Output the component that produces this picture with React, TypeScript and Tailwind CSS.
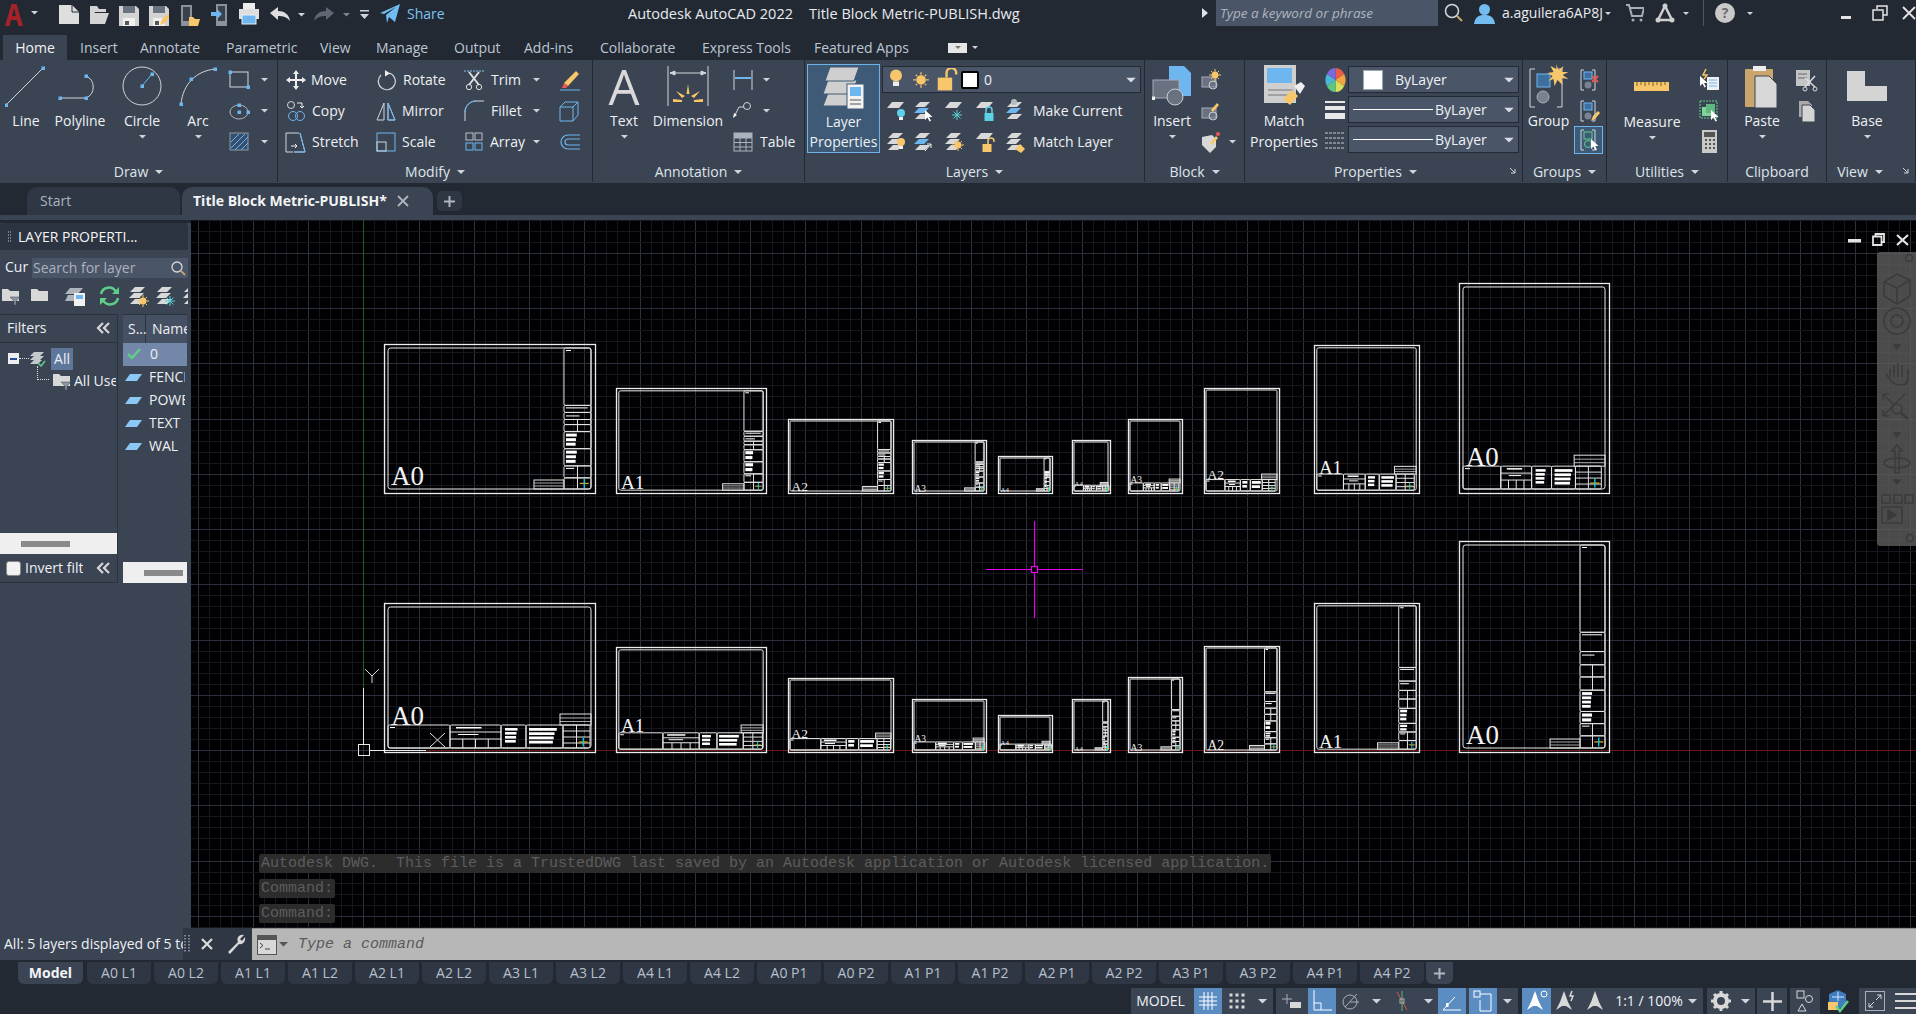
import React from 'react';

const B = '#6db6f0', L = '#d9d9d9', Y = '#f9c76b', W = '#e8e8e8', GR = '#5fce8a';

const S = ({ w, h, children }: { w: number; h: number; children?: React.ReactNode }) => (
  <svg width={w} height={h} viewBox={`0 0 ${w} ${h}`} className="block shrink-0" fill="none">{children}</svg>
);
const G = ({ x, y, c = B }: { x: number; y: number; c?: string }) => <rect x={x - 1.5} y={y - 1.5} width={3.5} height={3.5} fill={c} />;
const Caret = ({ c = '#cfd4da', w = 8 }: { c?: string; w?: number }) => (
  <S w={w} h={Math.ceil(w / 2)}><path d={`M0 0H${w}L${w / 2} ${w / 2}Z`} fill={c} /></S>
);

/* ---------- layer mini icons ---------- */
const para = (x: number, y: number, c: string, w = 15, h = 5, st?: string) => (
  <polygon points={`${x + 5},${y} ${x + w},${y} ${x + w - 5},${y + h} ${x},${y + h}`} fill={c} stroke={st} />
);
const Bulb = ({ x, y, c }: { x: number; y: number; c: string }) => (
  <g><circle cx={x} cy={y} r={4} fill={c} /><rect x={x - 2} y={y + 4} width={4} height={3} fill="#eee" /></g>
);
const Lock = ({ x, y, c, open }: { x: number; y: number; c: string; open?: boolean }) => (
  <g>
    <rect x={x - 4.5} y={y} width={9} height={8} fill={c} />
    <path d={open ? `M${x + 1} ${y}v-3a3 3 0 0 1 6 0v1` : `M${x - 3} ${y}v-3a3 3 0 0 1 6 0v3`} stroke={c} strokeWidth={1.5} />
  </g>
);
const Sun = ({ x, y, c = Y }: { x: number; y: number; c?: string }) => (
  <g stroke={c} strokeWidth={1}>
    <circle cx={x} cy={y} r={3.2} fill={c} />
    <path d={`M${x} ${y - 6}v2M${x} ${y + 4}v2M${x - 6} ${y}h2M${x + 4} ${y}h2M${x - 4} ${y - 4}l1 1M${x + 3} ${y + 3}l1 1M${x + 4} ${y - 4}l-1 1M${x - 3} ${y + 3}l-1 1`} />
  </g>
);
const Snow = ({ x, y }: { x: number; y: number }) => (
  <path d={`M${x} ${y - 5}v10M${x - 5} ${y}h10M${x - 3.5} ${y - 3.5}l7 7M${x + 3.5} ${y - 3.5}l-7 7`} stroke="#5ed0d8" strokeWidth={1} />
);
const Cur = ({ x, y, c = '#fff' }: { x: number; y: number; c?: string }) => (
  <path d={`M${x} ${y}l0 10l2.5-2.5l2 4l1.5-.8l-2-3.8h3.5z`} fill={c} />
);
const One = ({ children }: { children: React.ReactNode }) => (
  <S w={22} h={24}>{para(2, 3, L, 17, 6)}{children}</S>
);
const Three = ({ mid = L, children }: { mid?: string; children: React.ReactNode }) => (
  <S w={22} h={24}>{para(3, 3, L)}{para(2, 9, mid)}{para(3, 15, L)}{children}</S>
);

const Line = () => <S w={42} h={44}><path d="M2 40L37 5" stroke="#cfd6de" /><G x={38} y={4} /><G x={1} y={41} /></S>;
const Polyline = () => <S w={46} h={44}><path d="M3 34H29A12 12 0 0 0 29 12" stroke="#cfd6de" /><G x={3} y={34} /><G x={29} y={34} /><G x={29} y={12} /></S>;
const Circle = () => <S w={42} h={44}><circle cx={21} cy={22} r={19} stroke="#cfd6de" /><path d="M21 22L31 10" stroke={B} /><G x={21} y={22} /><G x={31} y={10} c={B} /></S>;
const Arc = () => <S w={40} h={44}><path d="M3 40C5 20 18 7 37 5" stroke="#cfd6de" /><G x={3} y={40} /><G x={13} y={15} /><G x={37} y={5} /></S>;
const Rect = () => <S w={22} h={20}><rect x={2} y={2} width={18} height={15} stroke="#cfd6de" /><G x={2} y={2} /><G x={20} y={17} /></S>;
const Ell = () => <S w={22} h={20}><ellipse cx={11} cy={11} rx={9} ry={7} stroke="#aeb5bf" /><G x={11} y={11} /><G x={11} y={4} /><G x={20} y={11} /></S>;
const Hatch = () => (
  <S w={22} h={24}>
    <rect x={2} y={3} width={18} height={17} fill="#34506e" stroke="#8d97a3" />
    <path d="M3 12l8-8M3 18l14-14M7 20l13-13M13 20l7-7" stroke={B} />
  </S>
);
const Move = () => <S w={20} h={20}><path d="M10 0l3 4h-2v5h5V7l4 3l-4 3v-2h-5v5h2l-3 4l-3-4h2v-5H4v2L0 10l4-3v2h5V4H7z" fill="#eee" /></S>;
const Copy = () => (
  <S w={20} h={20}><circle cx={5} cy={4} r={3.5} stroke="#cfd6de" /><circle cx={7} cy={15} r={4.5} stroke={B} /><circle cx={14} cy={15} r={4.5} stroke={B} /><path d="M11 2h5v5l-2-2M16 7l2-2" stroke="#eee" /></S>
);
const Stretch = () => <S w={22} h={22}><path d="M1 2V21H8M1 2H14M15 2l5 19H9" stroke="#cfd6de" /><path d="M6 15h6M10 13l2 2-2 2" stroke="#eee" /><path d="M15 2l5 19H9" stroke={B} /></S>;
const Rotate = () => <S w={20} h={22}><path d="M13 4A8.5 8.5 0 1 1 5 6" stroke="#cfd6de" strokeWidth={1.2} /><path d="M9 1l5 3.5-5 3z" fill="#eee" /></S>;
const Mirror = () => <S w={20} h={20}><path d="M8 2L1 19H8ZM12 2L19 19H12Z" stroke="#cfd6de" /><path d="M12 2L19 19H12Z" stroke={B} /></S>;
const Scale = () => <S w={20} h={20}><rect x={1} y={1} width={18} height={18} stroke={B} /><rect x={1} y={10} width={9} height={9} stroke="#cfd6de" /></S>;
const Trim = () => (
  <S w={20} h={22}><path d="M0 2h20" stroke="#8fc7ee" strokeDasharray="2 1" /><path d="M5 3l10 13M15 3L5 16" stroke="#ddd" strokeWidth={2} /><circle cx={5} cy={18} r={2.7} stroke="#ddd" /><circle cx={15} cy={18} r={2.7} stroke="#ddd" /></S>
);
const Fillet = () => <S w={20} h={22}><path d="M1 21V12C1 6 6 1 12 1H20" stroke="#cfd6de" /><path d="M1 12C1 6 6 1 12 1" stroke={B} /></S>;
const ArrayI = () => <S w={18} h={20}>{[[1, 1], [10, 1], [1, 11], [10, 11]].map(([x, y], i) => <rect key={i} x={x} y={y} width={7} height={7} stroke={i > 1 ? B : '#b9c2cc'} />)}</S>;
const Eraser = () => <S w={22} h={24}><path d="M5 15L17 3l3 3L9 18z" fill={Y} /><path d="M5 15l4 3-2 2H3z" fill="#e55" /><path d="M1 22h20" stroke={B} /></S>;
const Box3 = () => <S w={20} h={22}><path d="M1 7h13v14H1zM1 7l5-5h13v13l-5 6M14 7l5-5" stroke={B} /></S>;
const Offset = () => <S w={22} h={18}><path d="M21 2H9a7 7 0 0 0 0 14h12M21 6H9a3 3 0 0 0 0 6h12" stroke={B} strokeWidth={1.2} /></S>;
const Dim = () => (
  <S w={42} h={44}>
    <path d="M1 2V42M41 2V42" stroke="#cfd6de" /><path d="M3 9H39M3 9l5-2v4zM39 9l-5-2v4z" stroke="#cfd6de" fill="#cfd6de" />
    <path d="M21 20l1.5 10h-3zM9 27l9 5l-3 2zM33 27l-9 5l3 2zM6 35l9 1v2l-9 0zM36 35l-9 1v2l9 0z" fill={Y} />
  </S>
);
const DimS = () => <S w={20} h={20}><path d="M1 0v20M19 0v20" stroke="#cfd6de" /><path d="M2 8h16" stroke={B} strokeWidth={2} /></S>;
const Leader = () => <S w={20} h={20}><circle cx={14} cy={5} r={3.5} stroke="#cfd6de" /><path d="M11 6H6L1 16" stroke="#cfd6de" /><path d="M0 17l1-5 3 2z" fill="#eee" /></S>;
const Tbl = () => <S w={20} h={20}><rect x={1} y={1} width={18} height={18} stroke="#aab2bc" /><path d="M1 6h18M1 10.500h18M1 15h18M7 6v13M13 6v13" stroke="#aab2bc" /><rect x={1} y={1} width={18} height={5} fill="#aab2bc" /></S>;
const LayerP = () => (
  <S w={42} h={44}>
    {para(0, 27, '#cfcfcf', 30, 13, '#3e5a76')}{para(0, 14, '#cfcfcf', 34, 14, '#3e5a76')}{para(2, 1, '#cfcfcf', 34, 14, '#3e5a76')}
    <rect x={24} y={18} width={17} height={25} fill="#f2f2f2" stroke="#3e5a76" />
    <rect x={27} y={21} width={11} height={9} fill={B} />
    <path d="M27 34h11M27 38h11" stroke="#555" />
  </S>
);
const Insert = () => (
  <S w={40} h={40}>
    <path d="M17 0H32L39 7V30H17Z" fill={B} />
    <rect x={1} y={14} width={26} height={18} fill="#687280" stroke="#aab" />
    <circle cx={23} cy={31} r={8} stroke="#c9ced4" fill="#687280" />
    <G x={1} y={32} c="#eee" />
  </S>
);
const MatchP = () => (
  <S w={42} h={42}>
    <rect x={1} y={0} width={32} height={38} fill="#cfcfcf" />
    <rect x={4} y={3} width={25} height={15} fill={B} />
    <path d="M5 25h25M5 30h25" stroke="#777" />
    <path d="M20 34l9-9 6 6-8 9z" fill={Y} /><path d="M31 21l7-4 4 4-5 8z" fill="#eee" />
  </S>
);
const GroupI = () => (
  <S w={40} h={44}>
    <path d="M6 5H1V43H6M28 5h5v38h-5" stroke="#cfd6de" />
    <rect x={8} y={10} width={13} height={13} fill="#3e6f9e" stroke={B} />
    <circle cx={14} cy={33} r={6} fill="#7a8290" stroke="#aab" />
    <path d="M27 0l2.500 6 5-4-2 6 7 0-6 3 6 4-7-1 1 7-5-5-3 6-1-7-5 2 4-5-5-3 6-1-3-6 6 3z" fill={Y} />
  </S>
);
const Brk = ({ children }: { children?: React.ReactNode }) => (
  <S w={22} h={24}>
    <path d="M6 2H3V22H6M14 2h3v20h-3" stroke="#cfd6de" />
    {children}
  </S>
);
const Ruler = () => <S w={36} h={12}><rect x={0} y={2} width={35} height={9} fill={Y} /><path d="M3 2v4M7 2v3M11 2v4M15 2v3M19 2v4M23 2v3M27 2v4M31 2v3" stroke="#77602a" /></S>;
const Paste = () => (
  <S w={34} h={44}>
    <rect x={0} y={5} width={28} height={38} fill="#cba56e" rx={1} />
    <rect x={8} y={2} width={13} height={5} fill="#eee" />
    <path d="M10 12H24L32 20V44H10Z" fill="#d8d8d8" stroke="#3b4453" />
  </S>
);
const BaseI = () => <S w={42} h={32}><path d="M1 1H19V16H41V31H1Z" fill="#d4d4d4" /></S>;
const Wheel = () => {
  const c = ['#e85d4a', '#f2a541', '#d8e05b', '#5fc77f', '#4ab8d8', '#7a6ae0'];
  const p = (a: number) => `${10.5 + 10 * Math.cos(a)} ${13 + 12 * Math.sin(a)}`;
  return (
    <S w={21} h={26}>
      {c.map((f, i) => {
        const a = ((i * Math.PI) / 3) - Math.PI / 2, b = a + Math.PI / 3;
        return <path key={i} d={`M10.500 13L${p(a)}A10 12 0 0 1 ${p(b)}Z`} fill={f} />;
      })}
    </S>
  );
};
const LW = () => <S w={21} h={24}><rect x={0} y={3} width={20} height={2} fill={W} /><rect x={0} y={8} width={20} height={4} fill={W} /><rect x={0} y={15} width={20} height={6} fill={W} /></S>;
const LT = () => <S w={21} h={20}><path d="M0 3h20M0 8h20M0 13h20M0 18h20" stroke="#c8ccd2" strokeDasharray="3 1" /></S>;

/* ---------- ribbon primitives ---------- */
const Panel = ({ w, title, titleCls = '', corner, children }: { w: string; title: string; titleCls?: string; corner?: boolean; children: React.ReactNode }) => (
  <div className={`${w} relative shrink-0 h-[122px] flex flex-col border-r border-[#222933]`}>
    <div className="h-[101px] flex pt-[4px]">{children}</div>
    <div className={`h-[21px] flex items-center justify-center gap-[7px] text-[#dfe4ea] ${titleCls}`}>
      <span>{title}</span>
      {title !== 'Clipboard' && <Caret />}
    </div>
    {corner && (
      <div className="absolute right-[5px] bottom-[7px]">
        <S w={8} h={8}><path d="M1 1l5 5M6 2v4H2" stroke="#cfd4da" /></S>
      </div>
    )}
  </div>
);
const Big = ({ w, icon, label, label2, arrow = true }: { w: string; icon: React.ReactNode; label: string; label2?: string; arrow?: boolean }) => (
  <div className={`${w} shrink-0 flex flex-col items-center`}>
    <div className="h-[44px] flex items-center justify-center">{icon}</div>
    <div className="h-[20px] leading-[20px] mt-[3px] whitespace-nowrap text-[#eef1f4]">{label}</div>
    {label2 && <div className="h-[20px] leading-[20px] mt-[1px] whitespace-nowrap text-[#eef1f4]">{label2}</div>}
    {arrow && !label2 && <div className="mt-[4px]"><Caret c="#cfd4da" w={7} /></div>}
  </div>
);
const Row = ({ children, cls = '' }: { children: React.ReactNode; cls?: string }) => <div className={`h-[31px] flex items-center ${cls}`}>{children}</div>;
const Tool = ({ w, gap, icon, label, arrow }: { w: string; gap: string; icon: React.ReactNode; label: string; arrow?: boolean }) => (
  <div className={`${w} shrink-0 flex items-center`}>
    <div className="w-[20px] flex justify-center">{icon}</div>
    <span className={`${gap} text-[#eef1f4]`}>{label}</span>
    {arrow && <div className="ml-auto mr-[19px]"><Caret w={7} /></div>}
  </div>
);
const Drop = ({ cls, children }: { cls: string; children: React.ReactNode }) => (
  <div className={`${cls} relative flex items-center bg-[#4a5568] border border-[#232a35]`}>
    {children}
    <div className="absolute right-[4px] top-1/2 -translate-y-1/2"><Caret c="#d8dce2" w={10} /></div>
  </div>
);

const RIBBON_TABS: [string, string][] = [
  ['Insert', 'w-[60px]'], ['Annotate', 'w-[86px]'], ['Parametric', 'w-[94px]'], ['View', 'w-[56px]'], ['Manage', 'w-[78px]'],
  ['Output', 'w-[70px]'], ['Add-ins', 'w-[76px]'], ['Collaborate', 'w-[102px]'], ['Express Tools', 'w-[112px]'], ['Featured Apps', 'w-[134px]'],
];

/* ---------- title bar ---------- */
const Floppy = ({ pen }: { pen?: boolean }) => (
  <S w={20} h={24}>
    <path d="M0 3H17L20 6V23H0Z" fill="#d3d3d3" />
    <rect x={4} y={3} width={12} height={7} fill="#6a7280" />
    <rect x={4} y={15} width={12} height={8} fill="#f0f0f0" /><rect x={6} y={18} width={4} height={4} fill="#555" />
    {pen && <path d="M11 22l2-6 6-5 2 2-5 7z" fill={Y} />}
  </S>
);
const TitleBar = () => (
  <div className="h-[33px] flex items-start text-[#e8ebef] relative">
    <div className="flex items-start pt-[3px] h-[33px]">
      <div className="ml-[5px] w-[18px]">
        <S w={18} h={23}><path d="M0 23L6.500 1H11.500L18 23H13.500L12 17H6L4.500 23ZM7 13H11L9 5Z" fill="#a5222a" /></S>
      </div>
      <div className="ml-[8px] mt-[8px]"><Caret w={7} /></div>
      <div className="ml-[21px]"><S w={20} h={22}><path d="M0 2H13L20 9V21H0Z" fill="#dedede" /><path d="M13 2V9H20" stroke="#222933" /></S></div>
      <div className="ml-[10px]"><S w={20} h={22}><path d="M1 21V3H8L10 6H17V9H6L1 21L4 10H20L16 21Z" fill="#d4d4d4" /></S></div>
      <div className="ml-[10px]"><Floppy /></div>
      <div className="ml-[10px]"><Floppy pen /></div>
      <div className="ml-[11px]"><S w={20} h={24}><rect x={1} y={2} width={11} height={21} fill="#8d929a" /><rect x={3} y={4} width={7} height={14} fill="#39414d" /><path d="M9 14H13L15 16H20L18 23H9Z" fill={Y} /></S></div>
      <div className="ml-[11px]"><S w={16} h={24}><rect x={5} y={1} width={11} height={22} fill="#8d929a" /><rect x={7} y={3} width={7} height={15} fill="#39414d" /><path d="M0 9h6V6l5 5-5 5v-3H0z" fill={B} /></S></div>
      <div className="ml-[12px]"><S w={20} h={22}><rect x={4} y={0} width={12} height={6} fill="#eee" /><rect x={0} y={6} width={20} height={10} fill="#dedede" /><rect x={3} y={12} width={14} height={9} fill={B} stroke="#eee" /></S></div>
      <div className="ml-[11px] mt-[4px]"><S w={20} h={14}><path d="M0 6L8 0V4C14 4 19 7 20 14C17 10 13 9 8 9V13Z" fill="#dedede" /></S></div>
      <div className="ml-[8px] mt-[10px]"><Caret w={7} /></div>
      <div className="ml-[9px] mt-[4px]"><S w={20} h={14}><path d="M20 6L12 0V4C6 4 1 7 0 14C3 10 7 9 12 9V13Z" fill="#5f6772" /></S></div>
      <div className="ml-[9px] mt-[10px]"><Caret c="#7d8590" w={7} /></div>
      <div className="ml-[10px] mt-[7px]"><S w={9} h={10}><path d="M0 0h9v1.500H0zM0 4h9L4.500 9z" fill="#cfd4da" /></S></div>
      <div className="ml-[11px]"><S w={20} h={21}><path d="M0 10L20 1L15 19L9 14L7 20L6 12L16 4L4 11Z" fill="#6fbdf2" /></S></div>
      <span className="ml-[7px] text-[#7cc4f2] leading-[21px]">Share</span>
    </div>
    <div className="absolute left-[628px] top-[5px] whitespace-nowrap text-[14.5px]">Autodesk AutoCAD 2022</div>
    <div className="absolute left-[809px] top-[5px] whitespace-nowrap text-[14.5px]">Title Block Metric-PUBLISH.dwg</div>
    <div className="ml-auto flex items-center h-[26px]">
      <S w={6} h={10}><path d="M0 0l6 5-6 5z" fill="#dfe3e8" /></S>
      <div className="ml-[8px] w-[222px] h-[26px] bg-[#4a5568] flex items-center pl-[4px] italic text-[#aeb5bf] text-[13.5px]">Type a keyword or phrase</div>
      <div className="ml-[6px]"><S w={20} h={20}><circle cx={8} cy={8} r={6.5} stroke="#d7d7d7" strokeWidth={1.5} /><path d="M13 13l5 5" stroke="#c9a56a" strokeWidth={2} /></S></div>
      <div className="ml-[10px]"><S w={21} h={21}><circle cx={10.500} cy={6.500} r={5.500} fill="#73bdf0" /><path d="M0 21C1 13 6 12 10.500 12S20 13 21 21Z" fill="#73bdf0" /></S></div>
      <span className="ml-[7px] w-[103px] whitespace-nowrap">a.aguilera6AP8J</span>
      <Caret w={6} />
      <div className="ml-[15px]"><S w={18} h={18}><path d="M0 1H3L6 12H16L18 4H4" stroke="#a8adb5" strokeWidth={2} /><circle cx={7} cy={16} r={1.500} fill="#a8adb5" /><circle cx={15} cy={16} r={1.500} fill="#a8adb5" /></S></div>
      <div className="ml-[11px]"><S w={20} h={20}><path d="M10 3L3 17H17Z" stroke="#cfcfcf" strokeWidth={2.500} /><circle cx={10} cy={3} r={2.500} fill="#cfcfcf" /><circle cx={3} cy={17} r={2.500} fill="#cfcfcf" /><circle cx={17} cy={17} r={2.500} fill="#cfcfcf" /></S></div>
      <div className="ml-[8px]"><Caret w={6} /></div>
      <div className="ml-[14px] w-px h-[26px] bg-[#4d5562]" />
      <div className="ml-[11px] w-[20px] h-[20px] rounded-full bg-[#c9c9c9] flex items-center justify-center text-[#6b6b6b] text-[14px] font-bold">?</div>
      <div className="ml-[12px]"><Caret w={6} /></div>
      <div className="ml-[88px] mt-[8px]"><S w={11} h={6}><rect y={2} width={10} height={3} fill="#e3e3e3" /></S></div>
      <div className="ml-[20px]"><S w={16} h={16}><path d="M5 4V1H15V10H11M1 5H11V15H1Z" stroke="#e3e3e3" strokeWidth={1.500} /></S></div>
      <div className="ml-[14px]"><S w={14} h={14}><path d="M1 1L13 13M13 1L1 13" stroke="#e3e3e3" strokeWidth={1.800} /></S></div>
    </div>
  </div>
);

const RibbonTabs = () => (
  <div className="h-[27px] flex items-end text-[#bcc6d2]">
    <div className="ml-[3px] w-[64px] h-[25px] bg-[#3b4453] flex items-center justify-center text-[#f0f3f6]">Home</div>
    <div className="ml-[13px] flex h-[25px] items-center">
      {RIBBON_TABS.map(([t, w]) => <div key={t} className={`${w} shrink-0 whitespace-nowrap`}>{t}</div>)}
      <div className="w-[19px] h-[10px] bg-[#e6e6e6] flex items-center justify-center"><Caret c="#777" w={6} /></div>
      <div className="ml-[5px]"><Caret w={6} /></div>
    </div>
  </div>
);

const Ribbon = () => (
  <div className="h-[123px] bg-[#3b4453] flex">
    <Panel w="w-[278px]" title="Draw">
      <Big w="w-[52px]" icon={<Line />} label="Line" arrow={false} />
      <Big w="w-[56px]" icon={<Polyline />} label="Polyline" arrow={false} />
      <Big w="w-[68px]" icon={<Circle />} label="Circle" />
      <Big w="w-[44px]" icon={<Arc />} label="Arc" />
      <div className="ml-[8px]">
        {[<Rect />, <Ell />, <Hatch />].map((ic, i) => (
          <Row key={i}><div className="w-[22px]">{ic}</div><div className="ml-[11px]"><Caret w={7} /></div></Row>
        ))}
      </div>
    </Panel>
    <Panel w="w-[315px]" title="Modify">
      <div className="ml-[8px]">
        <Row>
          <Tool w="w-[90px]" gap="ml-[5px]" icon={<Move />} label="Move" />
          <Tool w="w-[88px]" gap="ml-[7px]" icon={<Rotate />} label="Rotate" />
          <Tool w="w-[95px]" gap="ml-[7px]" icon={<Trim />} label="Trim" arrow />
          <Eraser />
        </Row>
        <Row>
          <Tool w="w-[90px]" gap="ml-[6px]" icon={<Copy />} label="Copy" />
          <Tool w="w-[88px]" gap="ml-[6px]" icon={<Mirror />} label="Mirror" />
          <Tool w="w-[95px]" gap="ml-[7px]" icon={<Fillet />} label="Fillet" arrow />
          <Box3 />
        </Row>
        <Row>
          <Tool w="w-[90px]" gap="ml-[6px]" icon={<Stretch />} label="Stretch" />
          <Tool w="w-[88px]" gap="ml-[6px]" icon={<Scale />} label="Scale" />
          <Tool w="w-[95px]" gap="ml-[6px]" icon={<ArrayI />} label="Array" arrow />
          <Offset />
        </Row>
      </div>
    </Panel>
    <Panel w="w-[212px]" title="Annotation">
      <Big w="w-[62px]" icon={<span className="text-[49px] leading-[44px] text-[#d9d9d9]">A</span>} label="Text" />
      <Big w="w-[66px]" icon={<Dim />} label="Dimension" arrow={false} />
      <div className="ml-[12px]">
        <Row><DimS /><div className="ml-[10px]"><Caret w={7} /></div></Row>
        <Row><Leader /><div className="ml-[10px]"><Caret w={7} /></div></Row>
        <Row><Tbl /><span className="ml-[7px] text-[#eef1f4]">Table</span></Row>
      </div>
    </Panel>
    <Panel w="w-[340px]" title="Layers">
      <div className="ml-[2px] w-[73px] h-[89px] border border-[#6db3e8] bg-[#3e5a76] flex flex-col items-center text-[#eef1f4]">
        <div className="h-[44px] mt-[1px] flex items-center"><LayerP /></div>
        <div className="h-[20px] leading-[20px] mt-[2px]">Layer</div>
        <div className="h-[20px] leading-[20px]">Properties</div>
      </div>
      <div className="ml-[2px]">
        <Drop cls="w-[259px] h-[27px] mt-[2px]">
          <div className="ml-[5px]"><S w={78} h={24}>
            <g transform="translate(-4 -3) scale(1.5)"><Bulb x={8} y={7} c={Y} /></g>
            <g transform="scale(1.3)"><Sun x={25.400} y={9.200} /></g>
            <g transform="scale(1.6)"><Lock x={35.600} y={6} c={Y} open /></g>
          </S></div>
          <div className="w-[18px] h-[18px] bg-white border-2 border-black rounded-[2px] -ml-[5px]" />
          <span className="ml-[5px] text-[#eef1f4]">0</span>
        </Drop>
        <div className="flex items-center h-[31px] mt-[2px]">
          <div className="w-[27px] pl-[3px]"><One><Bulb x={16} y={14} c="#5ed0e8" /></One></div>
          <div className="w-[30px] pl-[3px]"><Three mid={B}><Cur x={13} y={11} /></Three></div>
          <div className="w-[31px] pl-[4px]"><One><Snow x={14} y={16} /></One></div>
          <div className="w-[31px] pl-[4px]"><One><Lock x={15} y={14} c="#5ed0e8" /></One></div>
          <div className="w-[28px] pl-[3px]"><Three mid={B}><circle cx={10} cy={3} r={3} fill="#b6bcc4" /></Three></div>
          <span className="ml-[4px] text-[#eef1f4]">Make Current</span>
        </div>
        <div className="flex items-center h-[31px]">
          <div className="w-[27px] pl-[3px]"><Three><Bulb x={16} y={12} c={Y} /></Three></div>
          <div className="w-[30px] pl-[3px]"><Three mid={B}><path d="M13 21l6-7M19 14h-4M19 14v4" stroke="#eee" /></Three></div>
          <div className="w-[31px] pl-[4px]"><Three><Sun x={15} y={15} /></Three></div>
          <div className="w-[31px] pl-[4px]"><One><Lock x={13} y={14} c={Y} open /></One></div>
          <div className="w-[28px] pl-[3px]"><Three><path d="M11 19l5-5 5 5-4 4z" fill={Y} /></Three></div>
          <span className="ml-[4px] text-[#eef1f4]">Match Layer</span>
        </div>
      </div>
    </Panel>
    <Panel w="w-[100px]" title="Block">
      <Big w="w-[54px]" icon={<Insert />} label="Insert" />
      <div>
        <Row cls="w-[46px]"><div className="w-[23px] flex justify-center"><S w={20} h={22}><rect x={1} y={8} width={14} height={10} fill="#687280" stroke="#aab" /><circle cx={12} cy={16} r={4} stroke="#c9ced4" /><Sun x={14} y={6} /></S></div></Row>
        <Row><div className="w-[23px] flex justify-center"><S w={20} h={22}><rect x={1} y={8} width={14} height={10} fill="#687280" stroke="#aab" /><circle cx={12} cy={16} r={4} stroke="#c9ced4" /><path d="M10 10l6-7 2 2-6 7z" fill={Y} /></S></div></Row>
        <Row><div className="w-[23px] flex justify-center"><S w={20} h={22}><path d="M1 6l10-2 4 4v8l-6 6-8-8z" fill="#d8d8d8" /><path d="M9 12l6-7 2 2-6 7z" fill={Y} /><circle cx={17} cy={3} r={2} fill="#e55" /></S></div><div className="ml-[7px]"><Caret w={7} /></div></Row>
      </div>
    </Panel>
    <Panel w="w-[278px]" title="Properties" titleCls="pr-[16px]" corner>
      <Big w="w-[78px]" icon={<MatchP />} label="Match" label2="Properties" />
      <div className="mt-[2px] flex flex-col gap-[3px]">
        <div className="flex items-center">
          <div className="w-[25px] flex justify-center"><Wheel /></div>
          <Drop cls="w-[171px] h-[27px]">
            <div className="ml-[14px] w-[20px] h-[20px] bg-white border border-[#9aa]" />
            <span className="ml-[12px] text-[#eef1f4]">ByLayer</span>
          </Drop>
        </div>
        <div className="flex items-center">
          <div className="w-[25px] flex justify-center"><LW /></div>
          <Drop cls="w-[171px] h-[27px]">
            <div className="ml-[4px] w-[80px] h-px bg-white" />
            <span className="ml-[2px] text-[#eef1f4]">ByLayer</span>
          </Drop>
        </div>
        <div className="flex items-center">
          <div className="w-[25px] flex justify-center"><LT /></div>
          <Drop cls="w-[171px] h-[27px]">
            <div className="ml-[4px] w-[80px] h-px bg-white" />
            <span className="ml-[2px] text-[#eef1f4]">ByLayer</span>
          </Drop>
        </div>
      </div>
    </Panel>
    <Panel w="w-[84px]" title="Groups">
      <Big w="w-[51px]" icon={<GroupI />} label="Group" arrow={false} />
      <div className="w-[29px]">
        <Row cls="justify-center"><Brk><rect x={6} y={4} width={8} height={7} fill="#3e6f9e" stroke={B} /><circle cx={10} cy={17} r={3.500} fill="#7a8290" /><path d="M14 8l6 6M20 8l-6 6" stroke="#e55" strokeWidth={1.800} /></Brk></Row>
        <Row cls="justify-center"><Brk><rect x={6} y={4} width={8} height={7} fill="#3e6f9e" stroke={B} /><circle cx={10} cy={17} r={3.500} fill="#7a8290" /><path d="M13 22l2-5 5-5 2 2-5 6z" fill={Y} /></Brk></Row>
        <div className="h-[28px] border border-[#6db3e8] bg-[#3e5a76] flex items-center justify-center"><Brk><rect x={6} y={4} width={8} height={7} stroke={GR} /><circle cx={10} cy={16} r={3.500} stroke={GR} /><Cur x={13} y={11} /></Brk></div>
      </div>
    </Panel>
    <Panel w="w-[121px]" title="Utilities">
      <div className="w-[90px] shrink-0 flex flex-col items-center">
        <div className="h-[44px] flex items-center justify-center mt-[0px]"><Ruler /></div>
        <div className="h-[20px] leading-[20px] mt-[4px] text-[#eef1f4]">Measure</div>
        <div className="mt-[4px]"><Caret w={7} /></div>
      </div>
      <div className="w-[24px]">
        <Row cls="justify-center"><S w={22} h={24}><Cur x={2} y={8} /><rect x={9} y={9} width={12} height={13} fill="#f0f0f0" /><path d="M11 12h8M11 15h8M11 18h8" stroke={B} /><path d="M8 1l-3 6h4l-3 4" stroke={Y} strokeWidth={1.500} /></S></Row>
        <Row cls="justify-center"><S w={20} h={24}><rect x={1} y={2} width={17} height={17} stroke={GR} strokeDasharray="2 1" /><rect x={3} y={8} width={9} height={9} fill="#7fd49b" /><rect x={7} y={5} width={9} height={9} fill="#5fb97e" /><Cur x={12} y={11} /></S></Row>
        <Row cls="justify-center"><S w={15} h={23}><rect x={0} y={0} width={15} height={23} fill="#c9c9c9" /><rect x={2} y={2} width={11} height={5} fill="#555" /><path d="M3 10h2M7 10h2M11 10h2M3 14h2M7 14h2M11 14h2M3 18h2M7 18h2M11 18h2" stroke="#555" strokeWidth={2} /></S></Row>
      </div>
    </Panel>
    <Panel w="w-[99px]" title="Clipboard">
      <Big w="w-[68px]" icon={<Paste />} label="Paste" />
      <div className="w-[22px]">
        <Row cls="justify-center"><S w={22} h={24}><rect x={0} y={2} width={14} height={16} fill="#c4c4c4" /><path d="M2 6h9M2 10h9" stroke="#666" /><path d="M9 10l10 9M19 8L9 19" stroke="#ddd" strokeWidth={1.500} /><circle cx={9} cy={21} r={2} stroke="#ddd" /><circle cx={19} cy={21} r={2} stroke="#ddd" /></S></Row>
        <Row cls="justify-center"><S w={18} h={24}><path d="M1 2H10L14 6V18H1Z" fill="#aaa" /><path d="M4 6H12L17 11V23H4Z" fill="#d4d4d4" stroke="#3b4453" /></S></Row>
      </div>
    </Panel>
    <Panel w="w-[89px]" title="View" titleCls="pr-[22px]" corner>
      <Big w="w-[80px]" icon={<BaseI />} label="Base" />
    </Panel>
  </div>
);

const DocTabs = () => (
  <div className="h-[32px] flex items-end pt-[4px]">
    <div className="ml-[27px] w-[153px] h-[28px] bg-[#2f3745] rounded-t-[10px] flex items-center pl-[13px] text-[#aab3be]">Start</div>
    <div className="ml-[2px] w-[251px] h-[28px] bg-[#3b4453] rounded-t-[10px] flex items-center pl-[11px] text-[#f2f4f6] font-bold whitespace-nowrap">
      Title Block Metric-PUBLISH*
      <div className="ml-[10px]"><S w={12} h={12}><path d="M1 1L11 11M11 1L1 11" stroke="#aeb5bf" strokeWidth={1.800} /></S></div>
    </div>
    <div className="ml-[4px] w-[25px] h-[20px] mb-[4px] bg-[#2f3745] rounded-[5px] flex items-center justify-center">
      <S w={11} h={11}><path d="M5.500 0V11M0 5.500H11" stroke="#aeb5bf" strokeWidth={2} /></S>
    </div>
  </div>
);

/* ---------- left palette ---------- */
const FolderI = ({ f }: { f?: boolean }) => (
  <S w={18} h={18}>
    <path d="M0 2H6L8 4H17V14H0Z" fill="#d8d8d8" />
    {f && <path d="M8 10H18L14 14V18H12V14Z" fill="#8e959e" stroke="#3b4453" strokeWidth={0.500} />}
  </S>
);
const LeftPanel = () => (
  <div className="w-[191px] shrink-0 h-[740px] bg-[#3b4453] flex flex-col text-[#eef1f4]">
    <div className="h-[3px] bg-[#222933]" />
    <div className="h-[27px] mr-[3px] bg-[#2d3441] rounded-t-[3px] flex items-center pl-[8px] whitespace-nowrap">
      <S w={4} h={12}><path d="M0 1h3M0 4h3M0 7h3M0 10h3" stroke="#c0c5cc" strokeDasharray="1 1" /></S>
      <span className="ml-[6px] text-[#f4f5f7]">LAYER PROPERTI...</span>
    </div>
    <div className="h-[28px] flex items-end">
      <span className="ml-[5px] w-[27px] h-[20px] text-[#eef1f4] overflow-hidden">Cur</span>
      <div className="w-[156px] h-[20px] bg-[#4a5568] flex items-center pl-[1px] text-[#aab2bd] relative">
        Search for layer
        <div className="absolute right-[2px] top-[2px]"><S w={16} h={16}><circle cx={7} cy={7} r={5} stroke="#d7d7d7" strokeWidth={1.300} /><path d="M11 11l4 4" stroke="#c9a56a" strokeWidth={1.800} /></S></div>
      </div>
    </div>
    <div className="h-[36px] flex items-center pl-[2px] overflow-hidden w-[188px]">
      <FolderI f />
      <div className="ml-[11px]"><FolderI /></div>
      <div className="ml-[8px] w-px h-[22px] bg-[#222933]" />
      <div className="ml-[8px]"><S w={20} h={20}><path d="M5 2H18L13 8H0ZM3 9H15L10 15H0Z" fill="#aeb4bb" /><rect x={9} y={7} width={11} height={13} fill="#f2f2f2" /><rect x={11} y={9} width={7} height={4} fill={B} /></S></div>
      <div className="ml-[14px]"><S w={21} h={20}><path d="M2 8A8 8 0 0 1 17 6M19 12A8 8 0 0 1 4 14" stroke={GR} strokeWidth={2.500} /><path d="M20 1v7h-7zM1 19v-7h7z" fill={GR} /></S></div>
      <div className="ml-[7px]"><Three><Sun x={16} y={17} /></Three></div>
      <div className="ml-[5px]"><Three><Snow x={16} y={17} /></Three></div>
      <div className="ml-[5px]"><Three><Bulb x={16} y={15} c={L} /></Three></div>
    </div>
    <div className="h-[269px] flex">
      <div className="w-[118px] h-[269px] border-t border-r border-b border-[#2c3340] flex flex-col">
        <div className="h-[28px] border-b border-[#2c3340] flex items-center pl-[7px] pr-[7px] justify-between">
          <span>Filters</span>
          <S w={14} h={12}><path d="M7 1L2 6l5 5M13 1L8 6l5 5" stroke="#d8d8d8" strokeWidth={2.200} /></S>
        </div>
        <div className="h-[191px] pt-[5px] pl-[8px]">
          <div className="flex items-center h-[22px]">
            <div className="w-[11px] h-[11px] bg-[#eee] flex items-center justify-center"><div className="w-[7px] h-[1.5px] bg-[#2a4a9a]" /></div>
            <div className="w-[10px] border-t border-dotted border-[#ddd]" />
            <div className="ml-[1px] w-[17px]"><S w={16} h={16}><path d="M4 1H14L10 5H0ZM4 5H14L10 9H0ZM4 9H12L8 13H0Z" fill="#c5c9ce" /><path d="M8 12l3 3 4-5" stroke={GR} strokeWidth={1.500} /></S></div>
            <div className="ml-[4px] w-[22px] h-[22px] bg-[#5e7699] flex items-center justify-center">All</div>
          </div>
          <div className="flex items-center h-[22px] relative">
            <div className="absolute left-[29px] -top-[4px] w-[12px] h-[14px] border-l border-b border-dotted border-[#ddd]" />
            <div className="ml-[45px]"><FolderI f /></div>
            <span className="ml-[3px] whitespace-nowrap overflow-hidden w-[42px]">All Users</span>
          </div>
        </div>
        <div className="h-[21px] bg-[#efefef] flex items-center pl-[21px]"><div className="w-[49px] h-[6px] bg-[#8a8a8a]" /></div>
        <div className="h-[28px] flex items-center pl-[6px] pr-[7px]">
          <div className="w-[15px] h-[15px] bg-[#f2f2f2] rounded-[3px] border border-[#888]" />
          <span className="ml-[4px] w-[58px] whitespace-nowrap overflow-hidden">Invert filter</span>
          <div className="ml-auto"><S w={14} h={12}><path d="M7 1L2 6l5 5M13 1L8 6l5 5" stroke="#d8d8d8" strokeWidth={2.200} /></S></div>
        </div>
      </div>
      <div className="ml-[5px] w-[64px] flex flex-col">
        <div className="h-[29px] flex bg-[#465063] border-t border-[#2c3340] items-center">
          <div className="w-[23px] h-full border-r border-[#2c3340] flex items-center pl-[5px]">S...</div>
          <span className="ml-[6px] whitespace-nowrap overflow-hidden w-[35px]">Name</span>
        </div>
        <div className="h-[23px] bg-[#7387a8] flex items-center pl-[4px]">
          <S w={14} h={12}><path d="M1 6l4 4 8-9" stroke={GR} strokeWidth={2.500} /></S>
          <span className="ml-[9px]">0</span>
        </div>
        {['FENCE', 'POWER', 'TEXT', 'WALL'].map((t, i) => (
          <div key={t} className="h-[23px] flex items-center pl-[2px]">
            <S w={17} h={9}><polygon points="5,1 17,1 12,8 0,8" fill="#8cc8f5" /></S>
            <span className={`ml-[7px] overflow-hidden whitespace-nowrap ${i === 3 ? 'w-[31px]' : 'w-[36px]'}`}>{t === 'WALL' ? 'WAL' : t}</span>
          </div>
        ))}
        <div className="h-[105px]" />
        <div className="h-[21px] bg-[#efefef] flex items-center pl-[21px]"><div className="w-[39px] h-[6px] bg-[#8a8a8a]" /></div>
      </div>
    </div>
    <div className="flex-1" />
    <div className="h-[32px] flex items-center">
      <span className="ml-[4px] w-[179px] overflow-hidden whitespace-nowrap">All: 5 layers displayed of 5 total layers</span>
      <div className="w-[8px] h-[32px] bg-[#2f3745] flex items-center justify-center">
        <S w={6} h={18}><path d="M1 0v18M5 0v18" stroke="#d0d4da" strokeDasharray="1.500 1.500" /></S>
      </div>
    </div>
  </div>
);

/* ---------- canvas ---------- */
const Blobs = ({ x, y, w, h }: { x: number; y: number; w: number; h: number }) => {
  const n = Math.max(2, Math.round(h / 4));
  return (
    <g>
      {Array.from({ length: n }).map((_, i) => (
        <rect key={i} x={x} y={y + (i * h) / n} width={w * (i === 0 ? 1 : 0.55 + ((i * 37) % 40) / 100)} height={Math.max(1, (h / n) * 0.65)} fill="#fff" />
      ))}
    </g>
  );
};
const Cross = ({ x, y, s }: { x: number; y: number; s: number }) => {
  const r = Math.max(2.5, 4.5 * s), sw = Math.max(1, 1.3 * s);
  return (
    <g>
      <path d={`M${x - r} ${y}H${x + r}`} stroke="#e8a020" strokeWidth={sw} />
      <path d={`M${x} ${y - r}V${y + r}`} stroke="#00dff0" strokeWidth={sw} />
    </g>
  );
};
type SheetP = { x: number; y: number; w: number; h: number; l: string; kind: 'v' | 'h' };
const Sheet = ({ x, y, w, h, l, kind }: SheetP) => {
  const long = Math.max(w, h), s = long / 211, i = Math.max(2, 4 * s), port = h > w;
  const ix = x + i, iy = y + i, ir = x + w - i, ib = y + h - i;
  const st = { stroke: '#e4e4e4', strokeWidth: 1, fill: 'none' };
  let tb: React.ReactNode = null;
  if (kind === 'v') {
    const tx = x + w * (port ? 0.807 : 0.853);
    const fr = port ? [0, 0.43, 0.525, 0.59, 0.65, 0.715, 0.82, 0.88, 0.94, 1] : [0, 0.407, 0.457, 0.507, 0.543, 0.593, 0.714, 0.836, 0.921, 1];
    const Y0 = (k: number) => iy + (ib - iy) * fr[k];
    const mid = (tx + ir) / 2;
    tb = (
      <g>
        {fr.slice(0, -1).map((_, k) => <rect key={k} x={tx} y={Y0(k)} width={ir - tx} height={Y0(k + 1) - Y0(k)} rx={Math.min(1.5, s * 1.5)} {...st} />)}
        <path d={`M${mid} ${Y0(3)}V${Y0(5)}M${mid} ${Y0(7)}V${ib}`} {...st} />
        <Blobs x={tx + 2 * s} y={Y0(5) + 2 * s} w={(ir - tx) * 0.4} h={(Y0(6) - Y0(5)) * 0.8} />
        <Blobs x={tx + 2 * s} y={Y0(6) + 2 * s} w={(ir - tx) * 0.4} h={(Y0(7) - Y0(6)) * 0.8} />
        <rect x={tx + 2 * s} y={Y0(0) + 2 * s} width={5 * s} height={1} fill="#fff" />
        <rect x={tx + 2 * s} y={Y0(1) + 2 * s} width={(ir - tx) * 0.8} height={1} fill="#fff" />
        <rect x={tx + 2 * s} y={Y0(2) + 3 * s} width={(ir - tx) * 0.5} height={1} fill="#fff" />
        <rect x={tx + 2 * s} y={Y0(7) + 2 * s} width={(ir - tx) * 0.3} height={1} fill="#fff" />
        <rect x={tx - 30 * s} y={ib - 9 * s} width={30 * s} height={9 * s} {...st} />
        <path d={`M${tx - 30 * s} ${ib - 6 * s}H${tx}M${tx - 30 * s} ${ib - 3 * s}H${tx}`} stroke="#d0d0d0" strokeWidth={0.800} />
        <Cross x={(mid + ir) / 2} y={(Y0(8) + ib) / 2} s={s} />
      </g>
    );
  } else {
    const fr = port ? [0, 38, 69, 89, 113, 139] : [0, 62, 113, 138, 175, 202];
    const bt = ib - 23 * s;
    const X = (k: number) => ix + fr[k] * s;
    tb = (
      <g>
        {fr.slice(0, -1).map((_, k) => <rect key={k} x={X(k)} y={bt} width={X(k + 1) - X(k)} height={ib - bt} rx={Math.min(1.5, s * 1.5)} {...st} />)}
        <path d={`M${X(1)} ${bt + 7 * s}H${X(2)}M${X(1)} ${bt + 14 * s}H${X(2)}M${X(4)} ${bt + 6 * s}H${X(5)}M${X(4)} ${bt + 12 * s}H${X(5)}M${X(4)} ${bt + 18 * s}H${X(5)}M${(X(4) + X(5)) / 2} ${bt}V${ib}`} {...st} />
        {[1, 2, 3].map(k => <path key={k} d={`M${X(1) + ((X(2) - X(1)) * k) / 4} ${bt + 14 * s}V${ib}`} {...st} />)}
        <rect x={X(0) + 2 * s} y={bt + 2 * s} width={5 * s} height={1} fill="#fff" />
        <rect x={X(1) + 6 * s} y={bt + 2 * s} width={(X(2) - X(1)) * 0.5} height={1.5} fill="#fff" />
        <rect x={X(1) + 8 * s} y={bt + 9 * s} width={(X(2) - X(1)) * 0.4} height={1} fill="#fff" />
        <Blobs x={X(2) + 4 * s} y={bt + 3 * s} w={(X(3) - X(2)) * 0.5} h={16 * s} />
        <Blobs x={X(3) + 3 * s} y={bt + 3 * s} w={(X(4) - X(3)) * 0.75} h={17 * s} />
        <rect x={ir - 31 * s} y={bt - 11 * s} width={31 * s} height={11 * s} {...st} />
        <path d={`M${ir - 31 * s} ${bt - 7 * s}H${ir}M${ir - 31 * s} ${bt - 3.5 * s}H${ir}`} stroke="#d0d0d0" strokeWidth={0.800} />
        <Cross x={(X(4) + X(5)) / 2 + (X(5) - X(4)) / 4} y={bt + 17 * s} s={s} />
      </g>
    );
  }
  const by = kind === 'h' ? 27.5 * s : 7.5 * s * s + 0.5;
  return (
    <g>
      <rect x={x + 0.5} y={y + 0.5} width={w} height={h} stroke="#ececec" strokeWidth={1.300} fill="none" />
      <rect x={ix} y={iy} width={ir - ix} height={ib - iy} rx={Math.min(3, 2.5 * s)} stroke="#ececec" strokeWidth={1} fill="none" />
      {tb}
      <text x={x + Math.max(2.5, 7 * s)} y={y + h - by} fontSize={27 * s} fill="#f2f2f2" className="font-['Liberation_Serif',serif]">{l}</text>
    </g>
  );
};
const xs: [number, number, string][] = [
  [384, 211, 'A0'], [616, 150, 'A1'], [788, 105, 'A2'], [912, 74, 'A3'], [998, 54, 'A4'],
  [1072, 38, 'A4'], [1128, 54, 'A3'], [1204, 75, 'A2'], [1314, 105, 'A1'], [1459, 150, 'A0'],
];
const topH = [149, 105, 74, 53, 37, 53, 74, 105, 148, 210];
const botH = [149, 105, 74, 53, 37, 53, 75, 106, 149, 211];
const Drawing = () => {
  const ox = 363.3, oy = 750, M = 11.05;
  const vs: React.ReactNode[] = [], hs: React.ReactNode[] = [];
  for (let k = -16; k < 141; k++) {
    const xx = Math.round(ox + k * M) + 0.5;
    vs.push(<path key={k} d={`M${xx} 220V928`} stroke={k % 5 === 0 ? '#2b303c' : '#14171d'} />);
  }
  for (let k = -16; k < 49; k++) {
    const yy = Math.round(oy - k * M) + 0.5;
    hs.push(<path key={k} d={`M191 ${yy}H1916`} stroke={k % 5 === 0 ? '#2b303c' : '#14171d'} />);
  }
  return (
    <svg width={1725} height={708} viewBox="191 220 1725 708" className="absolute inset-0 block" fill="none">
      {vs}{hs}
      <path d="M363.500 220V688" stroke="#1f5a1f" />
      <path d="M370 750.500H1916" stroke="#6a1616" />
      {xs.map(([x, w, l], k) => (
        <Sheet key={k} x={x} y={493 - topH[k]} w={w} h={topH[k]} l={l} kind={k < 5 ? 'v' : 'h'} />
      ))}
      {xs.map(([x, w, l], k) => (
        <Sheet key={k} x={x} y={752 - botH[k]} w={w} h={botH[k]} l={l} kind={k < 5 ? 'h' : 'v'} />
      ))}
      <rect x={358.500} y={744.500} width={11} height={11} stroke="#e8e8e8" />
      <path d="M363.500 744V688" stroke="#e8e8e8" />
      <path d="M370 750.500H426" stroke="#e8e8e8" />
      <path d="M365 669l7 7 7-7M372 676v7" stroke="#d8d8d8" />
      <path d="M430 733l15 14M445 733l-15 14" stroke="#e0e0e0" />
      <path d="M986 569.500H1083M1034.500 521V618" stroke="#e400e4" strokeWidth={1.200} />
      <rect x={1031.500} y={566.500} width={6} height={6} fill="#010103" stroke="#e400e4" strokeWidth={1.200} />
    </svg>
  );
};
const NavBar = () => (
  <svg width={39} height={294} viewBox="0 0 39 294" className="block" fill="none" stroke="#3b3b3b" strokeWidth={1.500}>
    <circle cx={32} cy={6} r={3.500} />
    <path d="M7 30L20 22L33 28V44L20 52L7 44ZM7 30L20 36L33 28M20 36V52" />
    <circle cx={20} cy={69} r={13} /><circle cx={20} cy={69} r={6} />
    <path d="M17 93h6l-3 4z" fill="#3b3b3b" />
    <path d="M9 122l4 6c3 4 6 5 12 5c5 0 6-4 6-8v-8M25 125v-12M21 125v-14M17 125v-12M13 125v-8" />
    <path d="M6 142l11 11M6 142v6M6 142h6M28 142L17 153M6 164l10-10M6 164v-6M6 164h6" />
    <circle cx={20} cy={157} r={5} /><path d="M24 161l7 6" strokeWidth={2.500} />
    <path d="M17 181h6l-3 4z" fill="#3b3b3b" />
    <path d="M20 193l-5 6h3v22h4v-22h3z" />
    <ellipse cx={20} cy={211} rx={13} ry={5} />
    <path d="M17 228h6l-3 4z" fill="#3b3b3b" />
    <rect x={5} y={243} width={8} height={8} /><rect x={17} y={243} width={8} height={8} /><rect x={28} y={243} width={8} height={8} />
    <rect x={5} y={255} width={20} height={16} /><path d="M11 258l8 5-8 5z" fill="#3b3b3b" />
    <circle cx={33} cy={286} r={3.500} />
  </svg>
);
const MONO = "font-['Liberation_Mono',monospace] text-[15px]";
const Canvas = () => (
  <div className="relative h-[708px] bg-[#010103] overflow-hidden">
    <Drawing />
    <div className="absolute right-[7px] top-[13px] flex items-center gap-[11px]">
      <S w={13} h={10}><rect y={4} width={13} height={3.500} fill="#e3e3e3" /></S>
      <S w={13} h={13}><path d="M3.500 3V1H12V9H10M1 3.500H9.500V12H1Z" stroke="#e3e3e3" strokeWidth={1.800} /></S>
      <S w={13} h={12}><path d="M1 1L12 11M12 1L1 11" stroke="#e3e3e3" strokeWidth={2.200} /></S>
    </div>
    <div className="absolute right-0 top-[32px] w-[39px] h-[294px] bg-[#5e5e5e]/80 rounded-l-[3px]"><NavBar /></div>
    <div className={`absolute left-[68px] bottom-[5px] flex flex-col items-start gap-[6px] text-[#5d5d5d] ${MONO}`}>
      <div className="h-[19px] leading-[19px] bg-[#2c2c2c] rounded-[2px] px-[2px] whitespace-pre">Autodesk DWG.  This file is a TrustedDWG last saved by an Autodesk application or Autodesk licensed application.</div>
      <div className="h-[19px] leading-[19px] bg-[#2c2c2c] rounded-[2px] px-[2px]">Command:</div>
      <div className="h-[19px] leading-[19px] bg-[#2c2c2c] rounded-[2px] px-[2px]">Command:</div>
    </div>
  </div>
);
const CmdBar = () => (
  <div className="h-[32px] flex">
    <div className="w-[61px] bg-[#2f3745] flex items-center">
      <div className="ml-[10px]"><S w={12} h={12}><path d="M1 1L11 11M11 1L1 11" stroke="#dcdcdc" strokeWidth={2.200} /></S></div>
      <div className="ml-[13px]"><S w={20} h={20}><path d="M2 18L12 8C10 3 14 0 18 1L14 5L16 7L19 3C20 8 16 11 13 10L4 20Z" fill="#d8d8d8" /></S></div>
    </div>
    <div className="flex-1 bg-[#b7b7b7] border-t border-[#8e8e8e] flex items-center">
      <div className="ml-[5px]"><S w={20} h={20}><rect x={0.500} y={0.500} width={19} height={19} fill="#d8d8d8" stroke="#555" /><rect x={1} y={1} width={18} height={4} fill="#555" /><path d="M3 8l3 2.500-3 2.500M8 14h5" stroke="#444" /></S></div>
      <div className="ml-[2px]"><Caret c="#555" w={9} /></div>
      <span className={`ml-[10px] italic text-[#5a5a5a] ${MONO}`}>Type a command</span>
    </div>
  </div>
);

/* ---------- bottom ---------- */
const LAYOUTS = ['A0 L1', 'A0 L2', 'A1 L1', 'A1 L2', 'A2 L1', 'A2 L2', 'A3 L1', 'A3 L2', 'A4 L1', 'A4 L2', 'A0 P1', 'A0 P2', 'A1 P1', 'A1 P2', 'A2 P1', 'A2 P2', 'A3 P1', 'A3 P2', 'A4 P1', 'A4 P2'];
const LayoutTabs = () => (
  <div className="h-[28px] pt-[2px] bg-[#222933]">
    <div className="flex h-[22px]">
      <div className="ml-[18px] w-[65px] bg-[#3b4453] rounded-b-[6px] flex items-center justify-center font-bold text-[#f2f4f6]">Model</div>
      <div className="ml-[4px] flex">
        {LAYOUTS.map(t => <div key={t} className="w-[64px] mr-[3px] bg-[#2f3745] rounded-b-[6px] flex items-center justify-center text-[#b7c0cc]">{t}</div>)}
      </div>
      <div className="ml-[-1px] w-[27px] bg-[#3b4453] rounded-b-[6px] flex items-center justify-center">
        <S w={11} h={11}><path d="M5.500 0V11M0 5.500H11" stroke="#aeb5bf" strokeWidth={2} /></S>
      </div>
    </div>
  </div>
);
const Cell = ({ w, on, children }: { w: string; on?: boolean; children: React.ReactNode }) => (
  <div className={`${w} h-full flex items-center justify-center shrink-0 ${on ? 'bg-[#5b8cc2]' : ''}`}>{children}</div>
);
const K = '#d8d8d8';
const Rocket = ({ c = K }: { c?: string }) => <path d="M9 1L13 12L17 20L11 16H7L1 20L5 12Z" fill={c} />;
const StatusBar = () => (
  <div className="h-[26px] bg-[#222933] flex justify-end">
    <div className="w-[142px] h-full bg-[#3b4453] flex">
      <Cell w="w-[59px]"><span className="text-[#eef1f4]">MODEL</span></Cell>
      <div className="w-[4px]" />
      <Cell w="w-[28px]" on><S w={18} h={18}><path d="M5 0v18M9 0v18M13 0v18M0 5h18M0 9h18M0 13h18" stroke="#fff" /></S></Cell>
      <Cell w="w-[30px]"><S w={16} h={16}>{[2, 8, 14].flatMap(a => [2, 8, 14].map(b => <rect key={`${a}${b}`} x={a - 1.500} y={b - 1.500} width={3} height={3} fill={K} />))}</S></Cell>
      <Cell w="w-[21px]"><Caret w={9} /></Cell>
    </div>
    <div className="ml-[3px] w-[242px] h-full bg-[#3b4453] flex">
      <Cell w="w-[32px]"><S w={20} h={18}><path d="M5 2v10M0 7h10" stroke="#a9afb7" /><rect x={8} y={10} width={11} height={6} fill={K} /></S></Cell>
      <Cell w="w-[28px]" on><S w={20} h={22}><path d="M2 0V20H20M2 13h7v7" stroke="#fff" /></S></Cell>
      <Cell w="w-[30px]"><S w={18} h={18}><circle cx={8} cy={10} r={7} stroke="#a9afb7" /><path d="M3 15L15 2M8 10H17" stroke="#a9afb7" /></S></Cell>
      <Cell w="w-[20px]"><Caret w={9} /></Cell>
      <Cell w="w-[32px]"><S w={14} h={20}><path d="M2 1L12 19" stroke="#e0524c" /><path d="M7 0V20" stroke="#58b56c" /><rect x={5} y={8} width={4} height={4} stroke="#a9afb7" /></S></Cell>
      <Cell w="w-[20px]"><Caret w={9} /></Cell>
      <Cell w="w-[28px]" on><S w={20} h={20}><path d="M1 19H19M1 19L13 6" stroke="#fff" /><rect x={4} y={12} width={2.500} height={4} fill="#fff" /></S></Cell>
      <div className="w-[3px]" />
      <Cell w="w-[28px]" on><S w={20} h={22}><path d="M7 4H18V21H7V10" stroke="#fff" /><rect x={1} y={1} width={6} height={6} stroke="#fff" /></S></Cell>
      <Cell w="w-[21px]"><Caret w={9} /></Cell>
    </div>
    <div className="ml-[4px] w-[181px] h-full bg-[#3b4453] flex">
      <Cell w="w-[29px]" on><S w={22} h={22}><Rocket c="#fff" /><circle cx={18} cy={4} r={3} stroke="#fff" /></S></Cell>
      <Cell w="w-[29px]"><S w={22} h={22}><Rocket /><path d="M17 1l-2 5h3l-2 5" stroke={K} strokeWidth={1.500} /></S></Cell>
      <Cell w="w-[29px]"><S w={18} h={22}><Rocket /></S></Cell>
      <Cell w="w-[94px]"><span className="text-[#eef1f4] whitespace-nowrap">1:1 / 100%</span><div className="ml-[5px]"><Caret w={9} /></div></Cell>
    </div>
    <div className="ml-[4px] w-[48px] h-full bg-[#3b4453] flex items-center pl-[4px]">
      <S w={20} h={20}><circle cx={10} cy={10} r={6} stroke={K} strokeWidth={4} /><path d="M10 0v4M10 16v4M0 10h4M16 10h4M3 3l3 3M14 14l3 3M17 3l-3 3M6 14l-3 3" stroke={K} strokeWidth={3} /></S>
      <div className="ml-[10px]"><Caret w={9} /></div>
    </div>
    <div className="ml-[2px] w-[30px] h-full bg-[#3b4453] flex items-center justify-center"><S w={19} h={19}><path d="M9.500 0V19M0 9.500H19" stroke={K} strokeWidth={2.500} /></S></div>
    <div className="ml-[3px] w-[30px] h-full bg-[#3b4453] flex items-center justify-center"><S w={18} h={22}><rect x={1} y={1} width={7} height={7} stroke={K} /><circle cx={13} cy={9} r={3.500} stroke={K} /><path d="M2 21l4-7 4 7z" stroke={K} /></S></div>
    <div className="ml-[5px] w-[26px] h-full flex items-center justify-center"><S w={24} h={24}><path d="M12 1L20 5V16L12 20L3 16V5Z" fill="#3f7dc0" /><path d="M12 3V12M6 8h12" stroke="#d8e8f8" /><rect x={2} y={13} width={10} height={8} fill={Y} /><path d="M10 17l4 5 8-10" stroke={GR} strokeWidth={2.500} /></S></div>
    <div className="ml-[8px] w-[57px] h-full bg-[#3b4453] flex items-center">
      <div className="ml-[6px]"><S w={20} h={20}><rect x={0.500} y={0.500} width={19} height={19} stroke="#a9afb7" /><path d="M11 9l5-5M12 4h4v4M9 11l-5 5M8 16H4v-4" stroke={K} /></S></div>
      <div className="ml-[10px]"><S w={21} h={18}><path d="M0 2h21M0 9h21M0 16h21" stroke={K} strokeWidth={2} /></S></div>
    </div>
  </div>
);

export default function App() {
  return (
    <div className="w-[1916px] h-[1014px] overflow-hidden bg-[#222933] text-[14px] leading-[18px] font-['Open_Sans','Noto_Sans',sans-serif] flex flex-col">
      <TitleBar />
      <RibbonTabs />
      <Ribbon />
      <DocTabs />
      <div className="h-[5px] bg-[#3b4453]" />
      <div className="h-[740px] flex">
        <LeftPanel />
        <div className="flex-1 flex flex-col">
          <Canvas />
          <CmdBar />
        </div>
      </div>
      <LayoutTabs />
      <StatusBar />
    </div>
  );
}
